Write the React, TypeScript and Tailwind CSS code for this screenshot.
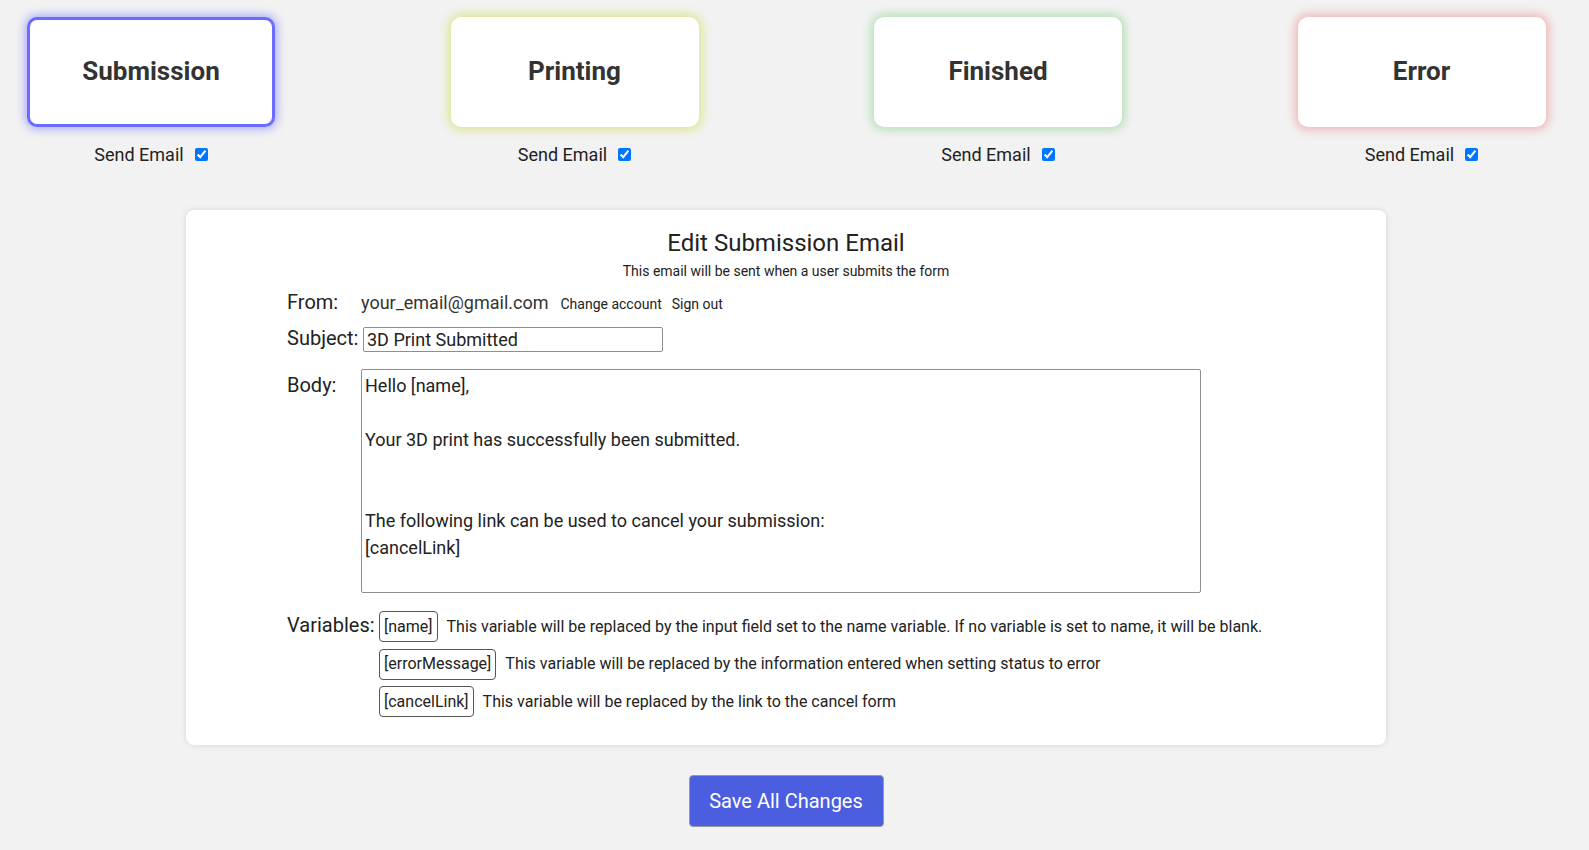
const statuses = [
  {
    name: "Submission",
    card: "border-[3px] border-[#6b6bff] shadow-[0_0_10px_2px_rgba(120,120,255,0.6)]",
  },
  {
    name: "Printing",
    card: "shadow-[0_0_10px_3px_rgba(218,226,120,0.8)]",
  },
  {
    name: "Finished",
    card: "shadow-[0_0_10px_3px_rgba(150,215,150,0.65)]",
  },
  {
    name: "Error",
    card: "shadow-[0_0_10px_3px_rgba(238,150,150,0.65)]",
  },
];

const variables = [
  {
    tag: "[name]",
    text: "This variable will be replaced by the input field set to the name variable. If no variable is set to name, it will be blank.",
  },
  {
    tag: "[errorMessage]",
    text: "This variable will be replaced by the information entered when setting status to error",
  },
  {
    tag: "[cancelLink]",
    text: "This variable will be replaced by the link to the cancel form",
  },
];

const body =
  "Hello [name],\n\nYour 3D print has successfully been submitted.\n\n\nThe following link can be used to cancel your submission:\n[cancelLink]";

function StatusCard({ name, card }: { name: string; card: string }) {
  return (
    <div className="flex flex-col items-center w-[248px]">
      <div
        className={`w-full h-[110px] rounded-[10px] bg-white flex items-center justify-center pb-[2px] text-[26px] font-bold text-[#333] ${card}`}
      >
        {name}
      </div>
      <label className="flex items-center mt-[17px] text-[18px] leading-[21px] text-[#222]">
        Send Email
        <input type="checkbox" defaultChecked className="ml-[11px] w-[13px] h-[13px]" />
      </label>
    </div>
  );
}

export default function App() {
  return (
    <div className="min-h-screen bg-[#f2f2f2] font-['Roboto',sans-serif] text-[#222]">
      <div className="w-[1572px] pb-[24px]">
        {/* status cards */}
        <div className="flex gap-[175.5px] pl-[27px] pt-[17px]">
          {statuses.map((s) => (
            <StatusCard key={s.name} name={s.name} card={s.card} />
          ))}
        </div>

        {/* email editor */}
        <section className="mx-auto mt-[45px] w-[1200px] rounded-lg bg-white shadow-[0_0_6px_rgba(0,0,0,0.12)] pt-[19px] pb-[28px]">
          <h2 className="text-center text-[24px] leading-[28px]">Edit Submission Email</h2>
          <p className="text-center text-[14px] leading-[16px] mt-[6px]">
            This email will be sent when a user submits the form
          </p>

          <div className="pl-[101px]">
            <div className="flex items-baseline mt-[11px] leading-[24px]">
              <span className="w-[74px] text-[20px]">From:</span>
              <span className="text-[18px] text-[#333]">your_email@gmail.com</span>
              <span className="ml-[12px] text-[14px]">Change account</span>
              <span className="ml-[10px] text-[14px]">Sign out</span>
            </div>

            <div className="flex items-center mt-[10px]">
              <span className="w-[74px] text-[20px] leading-[24px] pb-[2px]">Subject:</span>
              <input
                defaultValue="3D Print Submitted"
                className="ml-[2px] w-[300px] h-[25px] border border-[#8f8f8f] rounded-[2px] px-[3px] text-[18px] text-[#222]"
              />
            </div>

            <div className="flex items-start mt-[17px]">
              <span className="w-[74px] text-[20px] leading-[24px] pt-[4px]">Body:</span>
              <textarea
                defaultValue={body}
                className="w-[840px] h-[224px] border border-[#8f8f8f] rounded-[2px] px-[3px] py-[2px] text-[18px] leading-[27px] text-[#222] resize-none"
              />
            </div>

            <div className="flex items-start mt-[18px]">
              <span className="w-[92px] text-[20px] leading-[24px] pt-[2px]">Variables:</span>
              <div className="flex flex-col gap-[6.5px]">
                {variables.map((v) => (
                  <div key={v.tag} className="flex items-center h-[31px]">
                    <span className="h-full flex items-center px-[4px] border border-[#555] rounded-[4px] text-[16px]">
                      {v.tag}
                    </span>
                    <span className="ml-[9px] text-[16px]">{v.text}</span>
                  </div>
                ))}
              </div>
            </div>
          </div>
        </section>

        <div className="flex justify-center mt-[30px]">
          <button className="w-[195px] h-[52px] rounded-[4px] border border-[#9a9a9a] bg-[#4b5ee0] text-white text-[20px]">
            Save All Changes
          </button>
        </div>
      </div>
    </div>
  );
}
